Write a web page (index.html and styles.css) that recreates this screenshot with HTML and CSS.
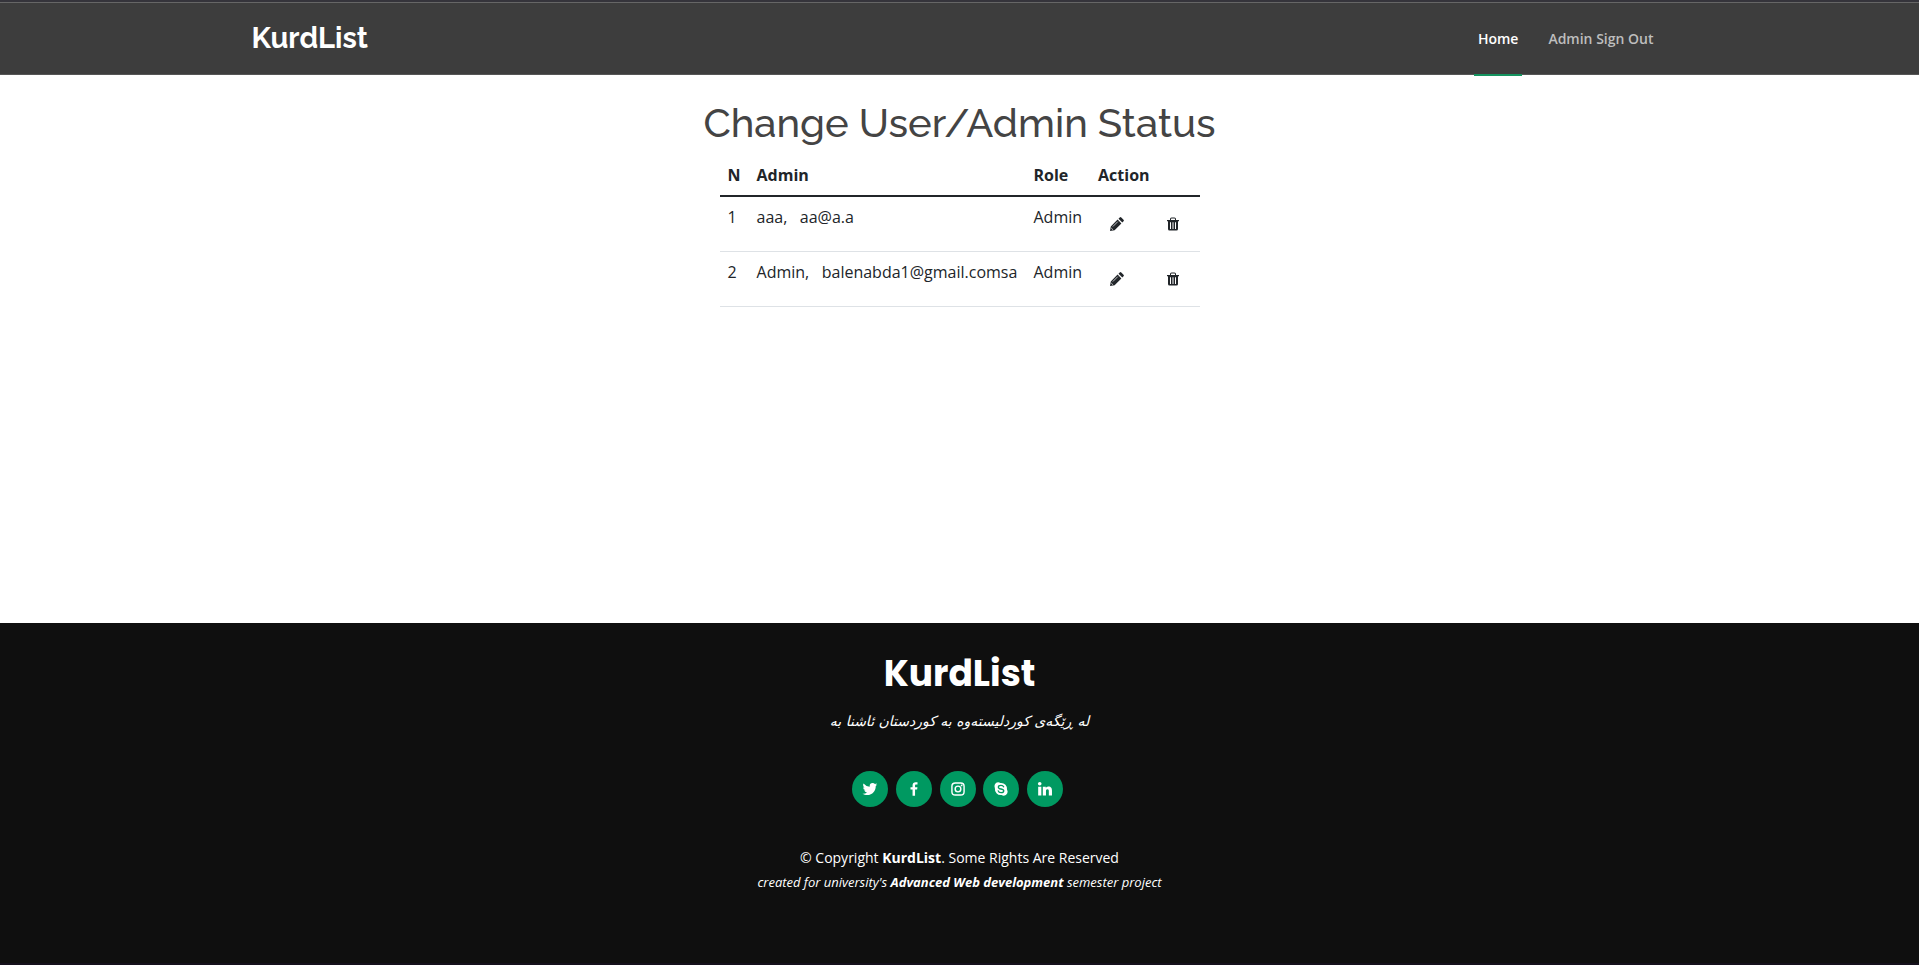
FILE: index.html
```html
<!DOCTYPE html>
<html lang="en">
<head>
<meta charset="utf-8">
<title>KurdList</title>
<link rel="stylesheet" href="styles.css">
</head>
<body>
<svg class="sprite" aria-hidden="true">
  <symbol id="pencil" viewBox="0 0 14 14"><path d="M0 14l.8-4.600 6.800-6.800 3.800 3.800-6.800 6.800zM8.500 1.700L9.700.5q.8-.8 1.600 0l2.200 2.200q.8.8 0 1.600l-1.200 1.200z"/><path d="M2.800 9.600l5-5" stroke="#fff" stroke-width=".7"/><path d="M1.200 11l1.800 1.800" stroke="#fff" stroke-width=".7"/></symbol>
  <symbol id="trash" viewBox="0 0 14 14"><path fill-rule="evenodd" d="M1 3h3V2q0-1.500 1.500-1.500h3Q10 .5 10 2v1h3v1.300h-1V12q0 1.500-1.500 1.500h-7Q2 13.500 2 12V4.300H1zM5 3h4V2q0-.5-.5-.5h-3Q5 1.500 5 2zM4 5.300v6.700h1v-6.700zM6.500 5.300v6.700h1v-6.700zM9 5.300v6.700h1v-6.700z"/></symbol>
</svg>
<header class="header">
  <div class="container">
    <a class="brand" href="#">KurdList</a>
    <nav class="nav">
      <a class="nav-link active" href="#">Home</a>
      <a class="nav-link" href="#">Admin Sign Out</a>
    </nav>
  </div>
</header>
<main class="main">
  <h1 class="title">Change User/Admin Status</h1>
  <table class="table">
    <colgroup><col><col class="who"><col><col class="act"><col></colgroup>
    <thead>
      <tr><th>N</th><th>Admin</th><th>Role</th><th colspan="2">Action</th></tr>
    </thead>
    <tbody>
      <tr>
        <td>1</td><td>aaa, &nbsp; aa@a.a</td><td>Admin</td>
        <td><button class="btn" type="button" aria-label="Edit"><svg class="glyph"><use href="#pencil"/></svg></button></td>
        <td><button class="btn" type="button" aria-label="Delete"><svg class="glyph"><use href="#trash"/></svg></button></td>
      </tr>
      <tr>
        <td>2</td><td>Admin, &nbsp; balenabda1@gmail.comsa</td><td>Admin</td>
        <td><button class="btn" type="button" aria-label="Edit"><svg class="glyph"><use href="#pencil"/></svg></button></td>
        <td><button class="btn" type="button" aria-label="Delete"><svg class="glyph"><use href="#trash"/></svg></button></td>
      </tr>
    </tbody>
  </table>
</main>
<footer class="footer">
  <h2 class="footer-title">KurdList</h2>
  <p class="tagline" lang="ckb" dir="rtl">لە ڕێگەی کوردلیستەوە بە کوردستان ئاشنا بە</p>
  <div class="social">
    <a href="#" aria-label="Twitter"><svg class="icon" viewBox="0 0 24 24"><path d="M19.630 7.997c.013.175.013.349.013.523 0 5.325-4.053 11.461-11.460 11.461-2.282 0-4.402-.661-6.186-1.809.324.037.636.050.973.050a8.070 8.070 0 0 0 5.001-1.721 4.036 4.036 0 0 1-3.767-2.793c.249.037.499.062.761.062.361 0 .724-.050 1.061-.137a4.027 4.027 0 0 1-3.230-3.953v-.050c.537.299 1.160.486 1.820.511a4.022 4.022 0 0 1-1.796-3.354c0-.748.199-1.434.548-2.032a11.457 11.457 0 0 0 8.306 4.215c-.062-.300-.100-.611-.100-.923a4.026 4.026 0 0 1 4.028-4.028c1.160 0 2.207.486 2.943 1.272a7.957 7.957 0 0 0 2.556-.973 4.020 4.020 0 0 1-1.771 2.220 8.073 8.073 0 0 0 2.319-.624 8.645 8.645 0 0 1-2.019 2.083z"/></svg></a>
    <a href="#" aria-label="Facebook"><svg class="icon" viewBox="0 0 24 24"><path d="M13.400 21v-8.200h2.770l.41-3.200H13.400V7.550c0-.920.260-1.560 1.580-1.560h1.690V3.130A22.300 22.300 0 0 0 14.200 3c-2.440 0-4.120 1.490-4.120 4.230V9.600H7.330v3.200h2.750V21z"/></svg></a>
    <a href="#" aria-label="Instagram"><svg class="icon" viewBox="0 0 24 24"><rect x="3.900" y="3.900" width="16.200" height="16.200" rx="4.500" fill="none" stroke="#fff" stroke-width="1.900"/><circle cx="12" cy="12" r="3.800" fill="none" stroke="#fff" stroke-width="1.900"/><circle cx="16.800" cy="7.200" r="1.200"/></svg></a>
    <a href="#" aria-label="Skype"><svg class="icon" viewBox="0 0 24 24"><path d="M8 3q2 0 3.200.9 4.100-.4 6.700 2.400 2.500 2.700 2.100 6.300 1.500 2.700.4 5.200-1.300 3-4.600 3.200-1.700 0-3-.9-4.200.4-6.800-2.400Q3.500 15 3.900 11.400q-1.500-2.900 0-5.700Q5.300 3.200 8 3z"/><path d="M15.500 9.100C14.900 7.700 13.600 7.200 12 7.200c-2 0-3.500.8-3.500 2.300 0 3.500 7.200 1.500 7.200 4.900 0 1.600-1.600 2.500-3.600 2.500-1.800 0-3.300-.8-3.800-2.400" fill="none" stroke="#009961" stroke-width="1.800" stroke-linecap="round"/></svg></a>
    <a href="#" aria-label="LinkedIn"><svg class="icon" viewBox="0 0 24 24"><circle cx="4.980" cy="5.010" r="2.400"/><path d="M2.900 8.900h4.200V20.600H2.900zM9.100 8.900h4v1.600c.5-.920 1.500-1.900 3.300-1.900 3.900 0 4.900 2.430 4.900 5.580v6.420h-4.200v-5.690c0-1.360-.03-2.700-1.800-2.700-1.700 0-2 1.300-2 2.600v5.790H9.100z"/></svg></a>
  </div>
  <p class="copyright">© Copyright <strong>KurdList</strong>. Some Rights Are Reserved</p>
  <p class="credits">created for university's <strong>Advanced Web development</strong> semester project</p>
</footer>
</body>
</html>
```
FILE: styles.css
```css
* { box-sizing: border-box; }
body {
  margin: 0;
  min-height: 100vh;
  display: flex;
  flex-direction: column;
  font-family: "Open Sans", sans-serif;
  font-size: 16px;
  line-height: 24px;
  color: #212529;
  background: #fff;
}
h1, h2, p { margin: 0; }
a { text-decoration: none; }
.sprite { display: none; }

.header {
  height: 75px;
  border-top: 2px solid #35343b;
  border-bottom: 1px solid #565656;
  background: #3d3d3d;
  box-shadow: inset 0 1px #666;
}
.container {
  height: 100%;
  max-width: 1440px;
  margin: 0 auto;
  padding: 0 12px;
  display: flex;
  align-items: center;
  justify-content: space-between;
}
.brand {
  font-family: Raleway, Lato, sans-serif;
  font-size: 29px;
  font-weight: 700;
  line-height: 36px;
  color: #fff;
}
.nav { display: flex; gap: 22px; height: 100%; padding-right: 10px; }
.nav-link {
  display: flex;
  align-items: center;
  height: 74px;
  padding: 2px 4px 0;
  font-size: 14px;
  font-weight: 600;
  color: #bebebe;
  border-bottom: 2px solid transparent;
}
.nav-link.active { color: #fff; border-color: #15935f; }

.main {
  flex: 1;
  display: flex;
  flex-direction: column;
  align-items: center;
  padding-top: 24px;
}
.title {
  margin-bottom: 8px;
  font-family: Raleway, Lato, sans-serif;
  font-size: 40px;
  font-weight: 500;
  line-height: 48px;
  color: #444;
}
.table { width: 480px; border-collapse: collapse; }
.table th, .table td {
  padding: 8px;
  text-align: left;
  vertical-align: top;
  border-bottom: 1px solid #dee2e6;
  white-space: nowrap;
}
.table th { font-weight: 700; border-bottom: 2px solid #212529; }
.who { width: 277px; }
.act { width: 56px; }
.btn {
  display: flex;
  align-items: center;
  justify-content: center;
  width: 38px;
  height: 38px;
  padding: 0;
  border: 0;
  background: none;
}
.glyph { width: 14px; height: 14px; fill: #212529; }

.footer {
  min-height: 342px;
  padding-top: 29px;
  border-bottom: 2px solid #15101c;
  background: #0f0f0f;
  color: #fff;
  font-size: 14px;
  text-align: center;
}
.footer-title {
  font-family: Poppins, Inter, sans-serif;
  font-size: 36px;
  font-weight: 700;
  line-height: 43px;
}
.tagline {
  margin: 15px 0 39px;
  font-family: "DejaVu Sans", sans-serif;
  font-size: 14px;
  font-style: italic;
  line-height: 22px;
}
.social { height: 36px; margin-bottom: 40px; }
.social a {
  display: inline-flex;
  align-items: center;
  justify-content: center;
  width: 36px;
  height: 36px;
  margin-right: 4px;
  border-radius: 50%;
  background: #009961;
  vertical-align: top;
}
.icon { width: 18px; height: 18px; fill: #fff; }
.copyright { line-height: 22px; }
.credits { margin-top: 3px; font-size: 13px; font-style: italic; line-height: 20px; }
```
